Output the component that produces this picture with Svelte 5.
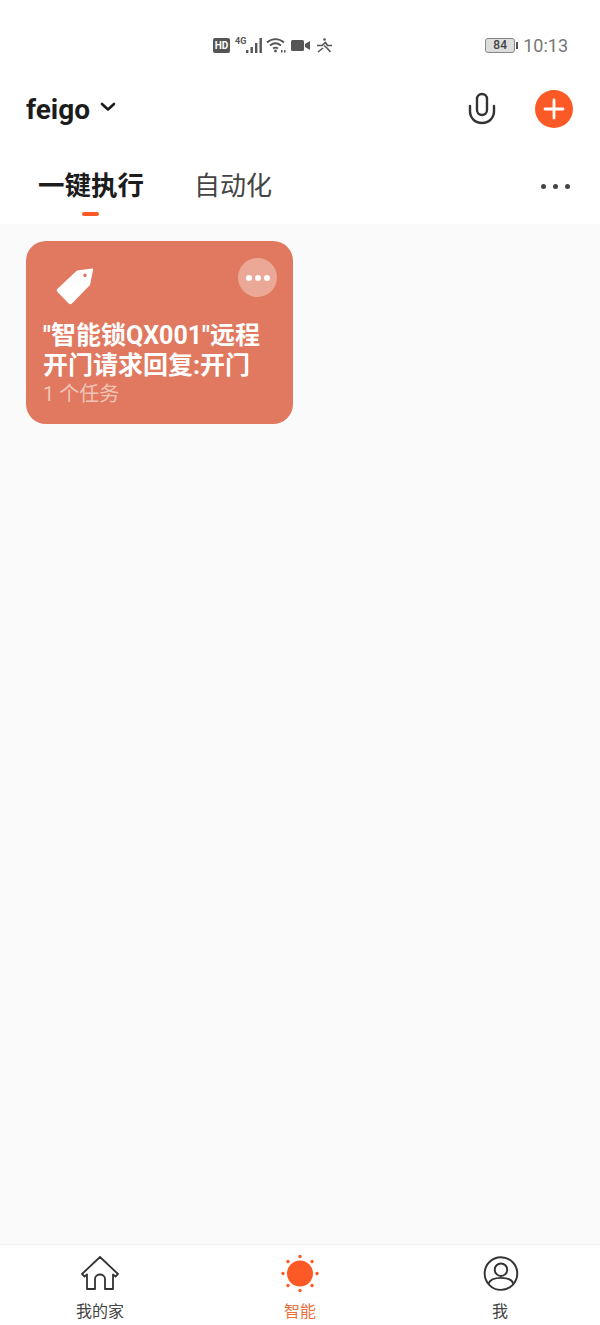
<script lang="ts">
    const tabs = [
        { label: '我的家', icon: 'home', active: false },
        { label: '智能', icon: 'sun', active: true },
        { label: '我', icon: 'user', active: false },
    ];
    const rays = [0, 45, 90, 135, 180, 225, 270, 315];
</script>

<div class="page">
    <header>
        <div class="status">
            <div class="status-mid">
                <span class="hd">HD</span>
                <span class="net">4G</span>
                <svg class="bars" width="16" height="17" viewBox="0 0 16 17" fill="#555"><rect x="0" y="13" width="2.400" height="3"/><rect x="4.500" y="10" width="2.400" height="6"/><rect x="9" y="6" width="2.400" height="10"/><rect x="13.500" y="1" width="2.400" height="15"/></svg>
                <svg class="wifi" width="21" height="16" viewBox="0 0 21 16" fill="none" stroke="#555" stroke-width="1.800"><path d="M1 5.500C6 1 13 1 18 5.500M4 8.500c3.500-2.800 7.500-2.800 11 0M7 11.500c1.800-1.300 3.200-1.300 5 0"/><circle cx="9.500" cy="14" r="1.400" fill="#555" stroke="none"/><rect x="15" y="13" width="1.500" height="2.500" fill="#555" stroke="none"/><rect x="18" y="13" width="1.500" height="2.500" fill="#555" stroke="none"/></svg>
                <svg class="cam" width="19" height="11" viewBox="0 0 19 11" fill="#555"><rect x="0" y="0" width="13" height="11" rx="1.500"/><path d="M14 4 19 1V10L14 7Z"/></svg>
                <svg class="run" width="17" height="15" viewBox="0 0 17 15" fill="none" stroke="#555" stroke-width="1.600"><circle cx="8.500" cy="1.500" r="1.300" fill="#555" stroke="none"/><path d="M1 7.500h5l3.500-3 2 3H16M8 7.500l3.500 3 3 3.500M7 10 2 14"/></svg>
            </div>
            <div class="status-right">
                <span class="battery"><span class="level">84</span></span>
                <span class="time">10:13</span>
            </div>
        </div>

        <div class="title-row">
            <div class="home-name">
                <span>feigo</span>
                <svg width="16" height="10" viewBox="0 0 16 10" fill="none" stroke="#1c1c1c" stroke-width="2.600" stroke-linecap="round" stroke-linejoin="round"><polyline points="2 2 8 7.500 14 2"></polyline></svg>
            </div>
            <div class="actions">
                <svg width="28" height="34" viewBox="0 0 28 34" fill="none" stroke="#333" stroke-width="2.400" stroke-linecap="round"><rect x="9" y="2" width="10" height="21" rx="5"/><path d="M2 14v5c0 7 5 12 12 12s12-5 12-12v-5"/></svg>
                <button class="add" aria-label="添加">
                    <svg width="24" height="24" viewBox="0 0 24 24" stroke="#fff" stroke-width="2.800" stroke-linecap="round"><path d="M12 3v18M3 12h18"/></svg>
                </button>
            </div>
        </div>

        <nav class="tabs">
            <div class="tab active">一键执行<i></i></div>
            <div class="tab">自动化</div>
            <div class="more"><b></b><b></b><b></b></div>
        </nav>
    </header>

    <main>
        <div class="card">
            <div class="card-top">
                <svg width="38" height="38" viewBox="0 0 38 38"><path fill="#fff" fill-rule="evenodd" d="M21 3.500 36 1.500c.8-.1 1.200.5 1.100 1.200L34 18 16 36.500c-1 1-2.300 1-3.300 0L1.500 25c-1-1-1-2.200 0-3.200ZM29 6.500a1.800 1.800 0 1 0 .01 0Z"/></svg>
                <div class="card-more"><b></b><b></b><b></b></div>
            </div>
            <div class="card-title">"智能锁QX001"远程<br />开门请求回复:开门</div>
            <div class="card-sub">1 个任务</div>
        </div>
    </main>

    <footer>
        {#each tabs as tab}
            <div class="foot-item" class:active={tab.active}>
                {#if tab.icon === 'home'}
                    <svg width="40" height="38" viewBox="0 0 40 38" fill="none" stroke="#333" stroke-width="1.800" stroke-linejoin="round" stroke-linecap="round"><path d="M2 19 20 2l18 17-2.500 2.500-2.500-2V34H25V24c0-6-10-6-10 0v10H7V19.500l-2.500 2Z"/></svg>
                {:else if tab.icon === 'sun'}
                    <svg width="40" height="38" viewBox="0 0 40 38" fill="#fb5a26">
                        <circle cx="20" cy="18.500" r="13"/>
                        {#each rays as r}
                            <circle cx="20" cy="1.500" r="1.700" transform="rotate({r} 20 18.500)"/>
                        {/each}
                    </svg>
                {:else}
                    <svg class="user" width="40" height="38" viewBox="0 0 40 38" fill="none" stroke="#333" stroke-width="2"><circle cx="20" cy="18.500" r="17"/><circle cx="20" cy="14.500" r="6.500"/><path d="M7 29c3-8 23-8 26 0"/></svg>
                {/if}
                <span>{tab.label}</span>
            </div>
        {/each}
    </footer>
</div>

<style>
    :global(body) {
        background: #fafafa;
    }

    .page {
        display: flex;
        flex-direction: column;
        height: 1325px;
        font-family: Roboto, "Noto Sans CJK SC", sans-serif;
        overflow: hidden;
    }

    header {
        background: #fff;
        height: 224px;
        flex-shrink: 0;
    }

    .status {
        display: flex;
        align-items: flex-start;
        padding-top: 36px;
        box-sizing: border-box;
        height: 81px;
    }

    .status-mid {
        margin-left: 213px;
        display: flex;
        align-items: center;
        height: 18px;
    }

    .hd {
        background: #555;
        color: #fff;
        font-size: 10px;
        font-weight: 700;
        line-height: 15px;
        width: 17px;
        text-align: center;
        border-radius: 2px;
    }

    .net {
        font-size: 9px;
        font-weight: 700;
        color: #555;
        margin: -9px 0 0 5px;
    }

    .bars {
        margin-left: 0;
    }

    .wifi {
        margin-left: 4px;
    }

    .cam {
        margin-left: 4px;
    }

    .run {
        margin-left: 6px;
    }

    .status-right {
        margin-left: auto;
        margin-right: 32px;
        display: flex;
        align-items: center;
        height: 18px;
        gap: 8px;
    }

    .battery {
        width: 28px;
        height: 13px;
        border: 1px solid #888;
        border-radius: 3px;
        background: #ddd;
        position: relative;
        display: flex;
        align-items: center;
        justify-content: center;
    }

    .battery::after {
        content: '';
        position: absolute;
        right: -4px;
        top: 3px;
        width: 2px;
        height: 7px;
        background: #555;
    }

    .level {
        font-size: 12px;
        font-weight: 500;
        color: #444;
    }

    .time {
        font-size: 18px;
        color: #777;
    }

    .title-row {
        height: 56px;
        display: flex;
        align-items: center;
        justify-content: space-between;
        padding: 0 27px 0 26px;
    }

    .home-name {
        display: flex;
        align-items: center;
        gap: 10px;
        font-size: 28px;
        font-weight: 700;
        color: #1c1c1c;
    }

    .home-name svg {
        margin-top: -4px;
    }

    .actions {
        display: flex;
        align-items: center;
        gap: 39px;
    }

    .add {
        width: 38px;
        height: 38px;
        border-radius: 50%;
        border: none;
        padding: 0;
        background: #fb5a26;
        display: flex;
        align-items: center;
        justify-content: center;
    }

    .tabs {
        display: flex;
        align-items: center;
        height: 60px;
        padding: 0 30px 0 38px;
        gap: 50px;
        margin-top: 19px;
    }

    .tab {
        position: relative;
        font-size: 26px;
        color: #444;
        line-height: 40px;
    }

    .tab.active {
        font-size: 26.500px;
        font-weight: 700;
        color: #1c1c1c;
    }

    .tab i {
        position: absolute;
        left: 44px;
        bottom: -10px;
        width: 17px;
        height: 4px;
        border-radius: 2px;
        background: #fb5a26;
    }

    .more {
        margin-left: auto;
        display: flex;
        gap: 7px;
    }

    .more b {
        width: 5px;
        height: 5px;
        border-radius: 50%;
        background: #444;
    }

    main {
        flex: 1;
        background: #fafafa;
        padding: 17px 26px;
    }

    .card {
        width: 267px;
        height: 183px;
        box-sizing: border-box;
        background: #e0795f;
        border-radius: 20px;
        padding: 17px 16px 0 17px;
        color: #fff;
    }

    .card-top {
        display: flex;
        justify-content: space-between;
        align-items: flex-start;
        height: 63px;
    }

    .card-top svg {
        margin: 9px 0 0 13px;
    }

    .card-more {
        width: 39px;
        height: 39px;
        border-radius: 50%;
        background: #eba896;
        display: flex;
        align-items: center;
        justify-content: center;
        gap: 3px;
    }

    .card-more b {
        width: 6px;
        height: 6px;
        border-radius: 50%;
        background: #fff;
    }

    .card-title {
        font-size: 25px;
        font-weight: 700;
        line-height: 30px;
        white-space: nowrap;
    }

    .card-sub {
        font-size: 20px;
        line-height: 27px;
        color: #f2c4b8;
    }

    footer {
        height: 81px;
        flex-shrink: 0;
        box-sizing: border-box;
        background: #fff;
        border-top: 1px solid #f2f2f2;
        display: grid;
        grid-template-columns: repeat(3, 1fr);
    }

    .foot-item {
        display: flex;
        flex-direction: column;
        align-items: center;
        padding-top: 10px;
        font-size: 16px;
        color: #444;
    }

    .foot-item span {
        line-height: 20px;
        margin-top: 9px;
    }

    .foot-item.active {
        color: #e8703f;
    }

    .user {
        transform: scale(0.96) translateX(1px);
    }
</style>
